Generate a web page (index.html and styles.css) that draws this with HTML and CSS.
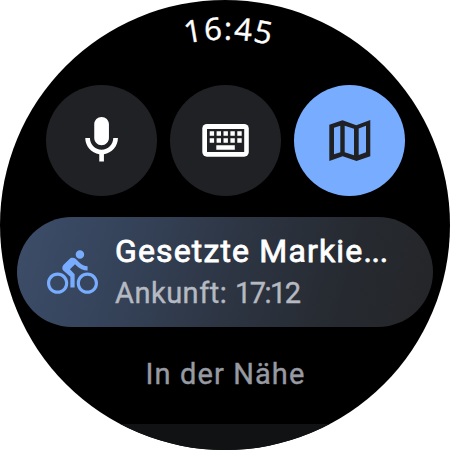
FILE: index.html
```html
<!DOCTYPE html>
<html lang="de">
<head>
<meta charset="utf-8">
<title>Karten</title>
<link rel="stylesheet" href="styles.css">
</head>
<body>
<main class="watch">
  <svg class="clock" viewBox="0 0 450 85">
    <path id="arc" d="M39.500 225A185.500 185.500 0 0 1 410.500 225" fill="none"/>
    <text><textPath href="#arc" startOffset="50.5%" text-anchor="middle" textLength="85">16:45</textPath></text>
  </svg>
  <nav class="actions">
    <button class="round" aria-label="Sprache">
      <svg viewBox="0 0 111 111"><path transform="translate(27.6 27.4) scale(2.333)" fill="#fff" d="M12 14.1c1.75 0 3.15-1.4 3.15-3.1V5.1C15.150 3.350 13.750 2 12 2S8.850 3.350 8.850 5.100V11c0 1.700 1.400 3.100 3.150 3.100zM17 11c0 2.760-2.240 5-5 5s-5-2.240-5-5H5c0 3.530 2.610 6.430 6 6.920V21h2v-3.080c3.390-.49 6-3.390 6-6.920z"/></svg>
    </button>
    <button class="round" aria-label="Tastatur">
      <svg viewBox="0 0 111 111">
        <rect x="32.300" y="39" width="46.500" height="32.700" rx="4.600" fill="#fff"/>
        <path fill="#202125" d="M37 44H74.200V67H37z"/>
        <path fill="#fff" d="M39.700 46.300h4.400v4.400h-4.400zM46.600 46.300H51v4.400h-4.400zM53.500 46.300h4.400v4.400h-4.400zM60.400 46.300h4.400v4.400h-4.400zM67.300 46.300h4.400v4.400h-4.400zM39.700 53.300h4.400v4.400h-4.400zM46.600 53.300H51v4.400h-4.400zM53.500 53.300h4.400v4.400h-4.400zM60.400 53.300h4.400v4.400h-4.400zM67.300 53.300h4.400v4.400h-4.400zM46.300 60.300h18.500v4.400H46.300z"/>
      </svg>
    </button>
    <button class="round primary" aria-label="Karte">
      <svg viewBox="0 0 111 111"><path fill="#202124" fill-rule="evenodd" d="M35.300 39.700 48.500 35.200 62.300 40.200 76.300 35V71.200L62.500 76 48.700 71.200 35.300 76zM40 42.700V69.300L46.300 67.300V40.700zM50.700 40.700V67.300L60 70.300V43.700zM64.700 43.500V70L72 67.300V40.700z"/></svg>
    </button>
  </nav>
  <section class="trip">
    <svg class="bike" viewBox="0 0 24 24"><path fill="#78acff" d="M15.500 5.500c1.100 0 2-.9 2-2s-.9-2-2-2-2 .9-2 2 .9 2 2 2zM5 12c-2.800 0-5 2.200-5 5s2.200 5 5 5 5-2.200 5-5-2.200-5-5-5zm0 8.500c-1.900 0-3.500-1.600-3.500-3.500s1.600-3.500 3.500-3.500 3.500 1.600 3.500 3.500-1.600 3.500-3.500 3.500zm5.800-10l2.400-2.400.8.8c1.300 1.300 3 2.100 5.100 2.100V9c-1.500 0-2.700-.6-3.600-1.500l-1.900-1.900c-.5-.4-1-.6-1.600-.6s-1.100.2-1.400.6L7.800 8.400c-.4.4-.6.9-.6 1.400 0 .6.2 1.100.6 1.400L11 14v5h2v-6.200l-2.200-2.300zM19 12c-2.800 0-5 2.200-5 5s2.200 5 5 5 5-2.200 5-5-2.200-5-5-5zm0 8.500c-1.900 0-3.500-1.600-3.500-3.500s1.600-3.500 3.500-3.500 3.500 1.600 3.500 3.500-1.600 3.500-3.500 3.500z"/></svg>
    <div class="info">
      <div class="title">Gesetzte Markie<span class="dots">...</span></div>
      <div class="eta">Ankunft: <span class="time">17:12</span></div>
    </div>
  </section>
  <h2 class="nearby">In der Nähe</h2>
  <div class="next"></div>
</main>
</body>
</html>
```
FILE: styles.css
```css
body {
  margin: 0;
  background: #fff;
}

.watch {
  width: 450px;
  height: 450px;
  border-radius: 50%;
  overflow: hidden;
  background: #000;
  font-family: Roboto, "Liberation Sans", sans-serif;
  display: flex;
  flex-direction: column;
}

.clock {
  display: block;
  width: 450px;
  height: 85px;
  flex: none;
}

.clock text {
  font: 400 31px "Open Sans", sans-serif;
  fill: #fff;
  stroke: #fff;
  stroke-width: 0.4px;
}

.actions {
  display: flex;
  gap: 13px;
  padding-left: 46px;
}

.round {
  width: 111px;
  height: 111px;
  padding: 0;
  border: 0;
  border-radius: 50%;
  background: #202125;
}

.round svg {
  display: block;
  width: 111px;
  height: 111px;
}

.primary {
  background: #78acff;
}

.trip {
  box-sizing: border-box;
  width: 416px;
  height: 110px;
  margin: 21px 0 0 17px;
  padding-left: 30px;
  border-radius: 55px;
  background: linear-gradient(105deg, #3d4d69 0%, #35435a 25%, #2d3543 52%, #262a30 78%, #242528 100%);
  display: flex;
  align-items: center;
  gap: 17px;
}

.bike {
  width: 51px;
  height: 51px;
  flex: none;
}

.info {
  white-space: nowrap;
}

.title {
  font-size: 32px;
  font-weight: 400;
  line-height: 42px;
  letter-spacing: 1.15px;
  -webkit-text-stroke: 0.8px #fff;
  color: #fff;
}

.dots {
  letter-spacing: -0.2px;
}

.eta {
  font-size: 29px;
  font-weight: 400;
  line-height: 42px;
  letter-spacing: 0.5px;
  -webkit-text-stroke: 0.4px #b5b9c1;
  color: #b5b9c1;
}

.time {
  letter-spacing: -1.5px;
}

.nearby {
  height: 42px;
  margin: 26px 0 29px 1px;
  text-align: center;
  font-size: 29px;
  font-weight: 400;
  line-height: 42px;
  letter-spacing: 1.1px;
  -webkit-text-stroke: 0.4px #979aa2;
  color: #979aa2;
}

.next {
  flex: 1;
  background: #111214;
}
```
